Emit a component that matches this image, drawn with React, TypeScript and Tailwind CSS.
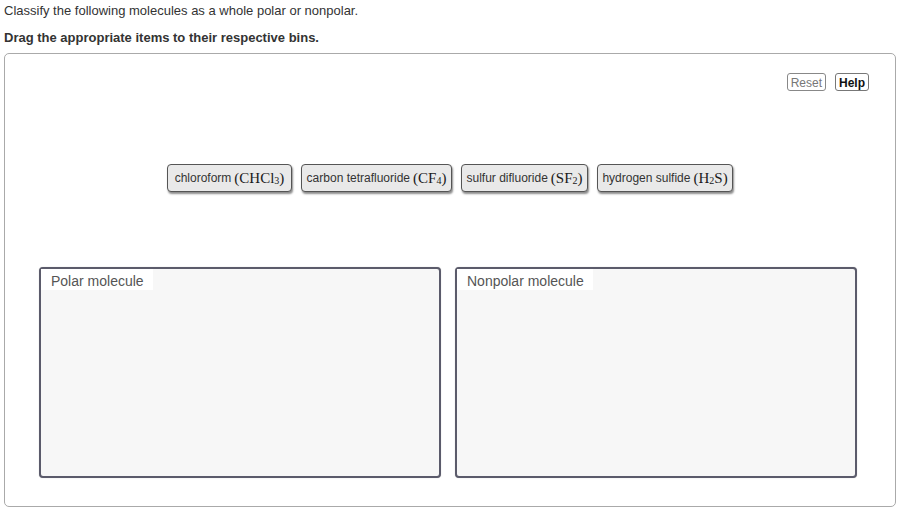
import React from "react"

const sans = "font-['Liberation_Sans',Arial,sans-serif]"
const serif = "font-['Liberation_Serif','DejaVu_Serif',serif]"

function Formula({ parts }: { parts: [string, string?][] }) {
  return (
    <span className={`${serif} text-[15px] text-[#1a1a1a]`}>
      (
      {parts.map(([main, sub], i) => (
        <span key={i}>
          {main}
          {sub && <sub className="text-[10px] relative top-[1px]">{sub}</sub>}
        </span>
      ))}
      )
    </span>
  )
}

function Chip({ label, parts, width }: { label: string; parts: [string, string?][]; width: string }) {
  return (
    <div
      className={`${width} h-[28px] flex items-center justify-center gap-[3px] rounded-[4px] border-[1.5px] border-[#555] bg-[#e9e9e9] shadow-[1px_2px_2px_rgba(0,0,0,0.45)] text-[12px] text-[#333] whitespace-nowrap`}
    >
      <span>{label}</span>
      <Formula parts={parts} />
    </div>
  )
}

function Bin({ title }: { title: string }) {
  return (
    <div className="w-[402px] h-[211px] rounded-[4px] border-2 border-[#5b5b6b] bg-[#f7f7f7] shadow-[0_0_1px_rgba(0,0,0,0.3)]">
      <div className="inline-block bg-white h-[21px] pl-[10px] pr-[9px] pt-[2px] text-[14px] text-[#555]">
        {title}
      </div>
    </div>
  )
}

export default function App() {
  return (
    <div className={`${sans} w-[905px] h-[511px] bg-white text-[#333] overflow-hidden`}>
      <p className="pl-[4px] pt-[3px] text-[13px] leading-[15px]">
        Classify the following molecules as a whole polar or nonpolar.
      </p>
      <p className="pl-[4px] mt-[12px] text-[13px] leading-[15px] font-bold">
        Drag the appropriate items to their respective bins.
      </p>
      <div className="ml-[4px] mt-[8px] w-[892px] h-[454px] rounded-[5px] border border-[#aaa] flex flex-col">
        <div className="flex justify-end gap-[9px] pr-[26px] pt-[19px]">
          <button className="h-[18px] px-[3px] rounded-[3px] border border-[#888] bg-white text-[12px] text-[#777]">
            Reset
          </button>
          <button className="h-[18px] px-[3px] rounded-[3px] border border-[#777] bg-white text-[12px] font-bold text-[#111]">
            Help
          </button>
        </div>
        <div className="flex justify-center gap-[9px] mt-[73px]">
          <Chip width="w-[125px]" label="chloroform" parts={[["CHCl", "3"]]} />
          <Chip width="w-[151px]" label="carbon tetrafluoride" parts={[["CF", "4"]]} />
          <Chip width="w-[127px]" label="sulfur difluoride" parts={[["SF", "2"]]} />
          <Chip width="w-[136px]" label="hydrogen sulfide" parts={[["H", "2"], ["S"]]} />
        </div>
        <div className="flex gap-[14px] pl-[34px] mt-[75px]">
          <Bin title="Polar molecule" />
          <Bin title="Nonpolar molecule" />
        </div>
      </div>
    </div>
  )
}
